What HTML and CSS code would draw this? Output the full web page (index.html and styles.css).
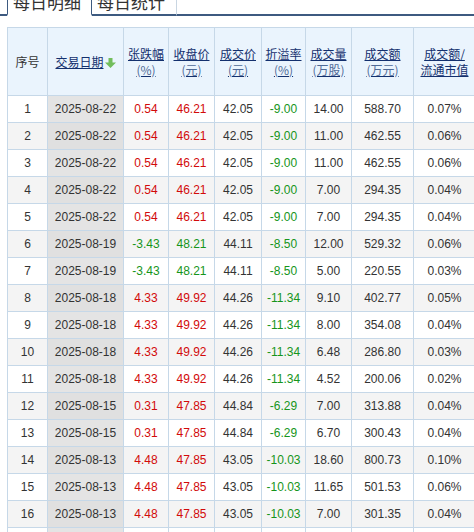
FILE: index.html
```html
<!DOCTYPE html>
<html lang="zh-CN">
<head>
<meta charset="utf-8">
<title>每日明细</title>
<link rel="stylesheet" href="styles.css">
</head>
<body>
<div class="tabs">
  <div class="tab tab-active">每日明细</div>
  <div class="tab">每日统计</div>
</div>
<div class="panel">
<table class="grid">
  <colgroup>
    <col class="c1"><col class="c2"><col class="c3"><col class="c4"><col class="c5"><col class="c6"><col class="c7"><col class="c8"><col class="c9">
  </colgroup>
  <thead>
    <tr>
      <th><span class="plain">序号</span></th>
      <th><a href="#" class="hl">交易日期</a><svg class="sort" width="11" height="10" viewBox="0 0 11 10"><path d="M3.5 0h4v4.5H11L5.5 10 0 4.5h3.5z" fill="#72bd5c"/></svg></th>
      <th><a href="#" class="hl">张跌幅<br><span class="unit">(%)</span></a></th>
      <th><a href="#" class="hl">收盘价<br><span class="unit">(元)</span></a></th>
      <th><a href="#" class="hl">成交价<br><span class="unit">(元)</span></a></th>
      <th><a href="#" class="hl">折溢率<br><span class="unit">(%)</span></a></th>
      <th><a href="#" class="hl">成交量<br><span class="unit">(万股)</span></a></th>
      <th><a href="#" class="hl">成交额<br><span class="unit">(万元)</span></a></th>
      <th><a href="#" class="hl">成交额/<br>流通市值</a></th>
    </tr>
  </thead>
  <tbody>
    <tr><td>1</td><td class="date">2025-08-22</td><td class="up">0.54</td><td class="up">46.21</td><td>42.05</td><td class="down">-9.00</td><td>14.00</td><td>588.70</td><td>0.07%</td></tr>
    <tr><td>2</td><td class="date">2025-08-22</td><td class="up">0.54</td><td class="up">46.21</td><td>42.05</td><td class="down">-9.00</td><td>11.00</td><td>462.55</td><td>0.06%</td></tr>
    <tr><td>3</td><td class="date">2025-08-22</td><td class="up">0.54</td><td class="up">46.21</td><td>42.05</td><td class="down">-9.00</td><td>11.00</td><td>462.55</td><td>0.06%</td></tr>
    <tr><td>4</td><td class="date">2025-08-22</td><td class="up">0.54</td><td class="up">46.21</td><td>42.05</td><td class="down">-9.00</td><td>7.00</td><td>294.35</td><td>0.04%</td></tr>
    <tr><td>5</td><td class="date">2025-08-22</td><td class="up">0.54</td><td class="up">46.21</td><td>42.05</td><td class="down">-9.00</td><td>7.00</td><td>294.35</td><td>0.04%</td></tr>
    <tr><td>6</td><td class="date">2025-08-19</td><td class="down">-3.43</td><td class="down">48.21</td><td>44.11</td><td class="down">-8.50</td><td>12.00</td><td>529.32</td><td>0.06%</td></tr>
    <tr><td>7</td><td class="date">2025-08-19</td><td class="down">-3.43</td><td class="down">48.21</td><td>44.11</td><td class="down">-8.50</td><td>5.00</td><td>220.55</td><td>0.03%</td></tr>
    <tr><td>8</td><td class="date">2025-08-18</td><td class="up">4.33</td><td class="up">49.92</td><td>44.26</td><td class="down">-11.34</td><td>9.10</td><td>402.77</td><td>0.05%</td></tr>
    <tr><td>9</td><td class="date">2025-08-18</td><td class="up">4.33</td><td class="up">49.92</td><td>44.26</td><td class="down">-11.34</td><td>8.00</td><td>354.08</td><td>0.04%</td></tr>
    <tr><td>10</td><td class="date">2025-08-18</td><td class="up">4.33</td><td class="up">49.92</td><td>44.26</td><td class="down">-11.34</td><td>6.48</td><td>286.80</td><td>0.03%</td></tr>
    <tr><td>11</td><td class="date">2025-08-18</td><td class="up">4.33</td><td class="up">49.92</td><td>44.26</td><td class="down">-11.34</td><td>4.52</td><td>200.06</td><td>0.02%</td></tr>
    <tr><td>12</td><td class="date">2025-08-15</td><td class="up">0.31</td><td class="up">47.85</td><td>44.84</td><td class="down">-6.29</td><td>7.00</td><td>313.88</td><td>0.04%</td></tr>
    <tr><td>13</td><td class="date">2025-08-15</td><td class="up">0.31</td><td class="up">47.85</td><td>44.84</td><td class="down">-6.29</td><td>6.70</td><td>300.43</td><td>0.04%</td></tr>
    <tr><td>14</td><td class="date">2025-08-13</td><td class="up">4.48</td><td class="up">47.85</td><td>43.05</td><td class="down">-10.03</td><td>18.60</td><td>800.73</td><td>0.10%</td></tr>
    <tr><td>15</td><td class="date">2025-08-13</td><td class="up">4.48</td><td class="up">47.85</td><td>43.05</td><td class="down">-10.03</td><td>11.65</td><td>501.53</td><td>0.06%</td></tr>
    <tr><td>16</td><td class="date">2025-08-13</td><td class="up">4.48</td><td class="up">47.85</td><td>43.05</td><td class="down">-10.03</td><td>7.00</td><td>301.35</td><td>0.04%</td></tr>
    <tr><td></td><td class="date"></td><td></td><td></td><td></td><td></td><td></td><td></td><td></td></tr>
  </tbody>
</table>
</div>
</body>
</html>
```

FILE: styles.css
```css
html, body {
  margin: 0;
  padding: 0;
  background: #fff;
  overflow: hidden;
}
body {
  font-family: "Liberation Sans", Arial, "Noto Sans CJK SC", sans-serif;
  font-size: 12px;
  color: #333;
}
.tabs {
  display: flex;
  align-items: flex-end;
  height: 30px;
  margin-top: -16px;
  padding-left: 7px;
  border-bottom: 2px solid #3d5a80;
}
.tab {
  box-sizing: border-box;
  width: 85px;
  height: 30px;
  margin-bottom: -2px;
  padding-left: 5px;
  font-family: "Noto Sans CJK SC", sans-serif;
  font-size: 17px;
  line-height: 30px;
  color: #333;
  background: #fff;
  border: 1px solid #c9d6e2;
  border-bottom: 2px solid #3d5a80;
}
.tab-active {
  width: 85px;
  border: 1px solid #3d5a80;
  border-bottom: 2px solid #fff;
}
.tab-active + .tab {
  border-left: 0;
}
.panel {
  padding: 11px 0 0 7px;
}
.grid {
  border-collapse: collapse;
  table-layout: fixed;
  width: 468px;
}
.c1 { width: 40px; }
.c2 { width: 76px; }
.c3 { width: 45px; }
.c4 { width: 46px; }
.c5 { width: 47px; }
.c6 { width: 44px; }
.c7 { width: 46px; }
.c8 { width: 62px; }
.c9 { width: 62px; }
.grid th, .grid td {
  border: 1px solid #c6d8e8;
  text-align: center;
  padding: 0;
  white-space: nowrap;
}
.grid th {
  height: 67px;
  background: #eaf4fd;
  font-weight: normal;
  font-family: "Noto Sans CJK SC", sans-serif;
  font-size: 12px;
  line-height: 16px;
}
.plain { color: #333; }
.hl {
  color: #13306e;
  text-decoration: underline;
}
.unit { color: #4f6a97; }
.sort {
  vertical-align: -1px;
  margin-left: 1px;
}
.grid td {
  height: 26px;
  line-height: 26px;
}
.grid tbody tr:nth-child(even) td { background: #f4f4f4; }
.grid tbody td.date { background: #e4e4e4; }
.grid tbody tr:nth-child(even) td.date { background: #e0e0e0; }
.up { color: #d20a0a; }
.down { color: #16951b; }
```
